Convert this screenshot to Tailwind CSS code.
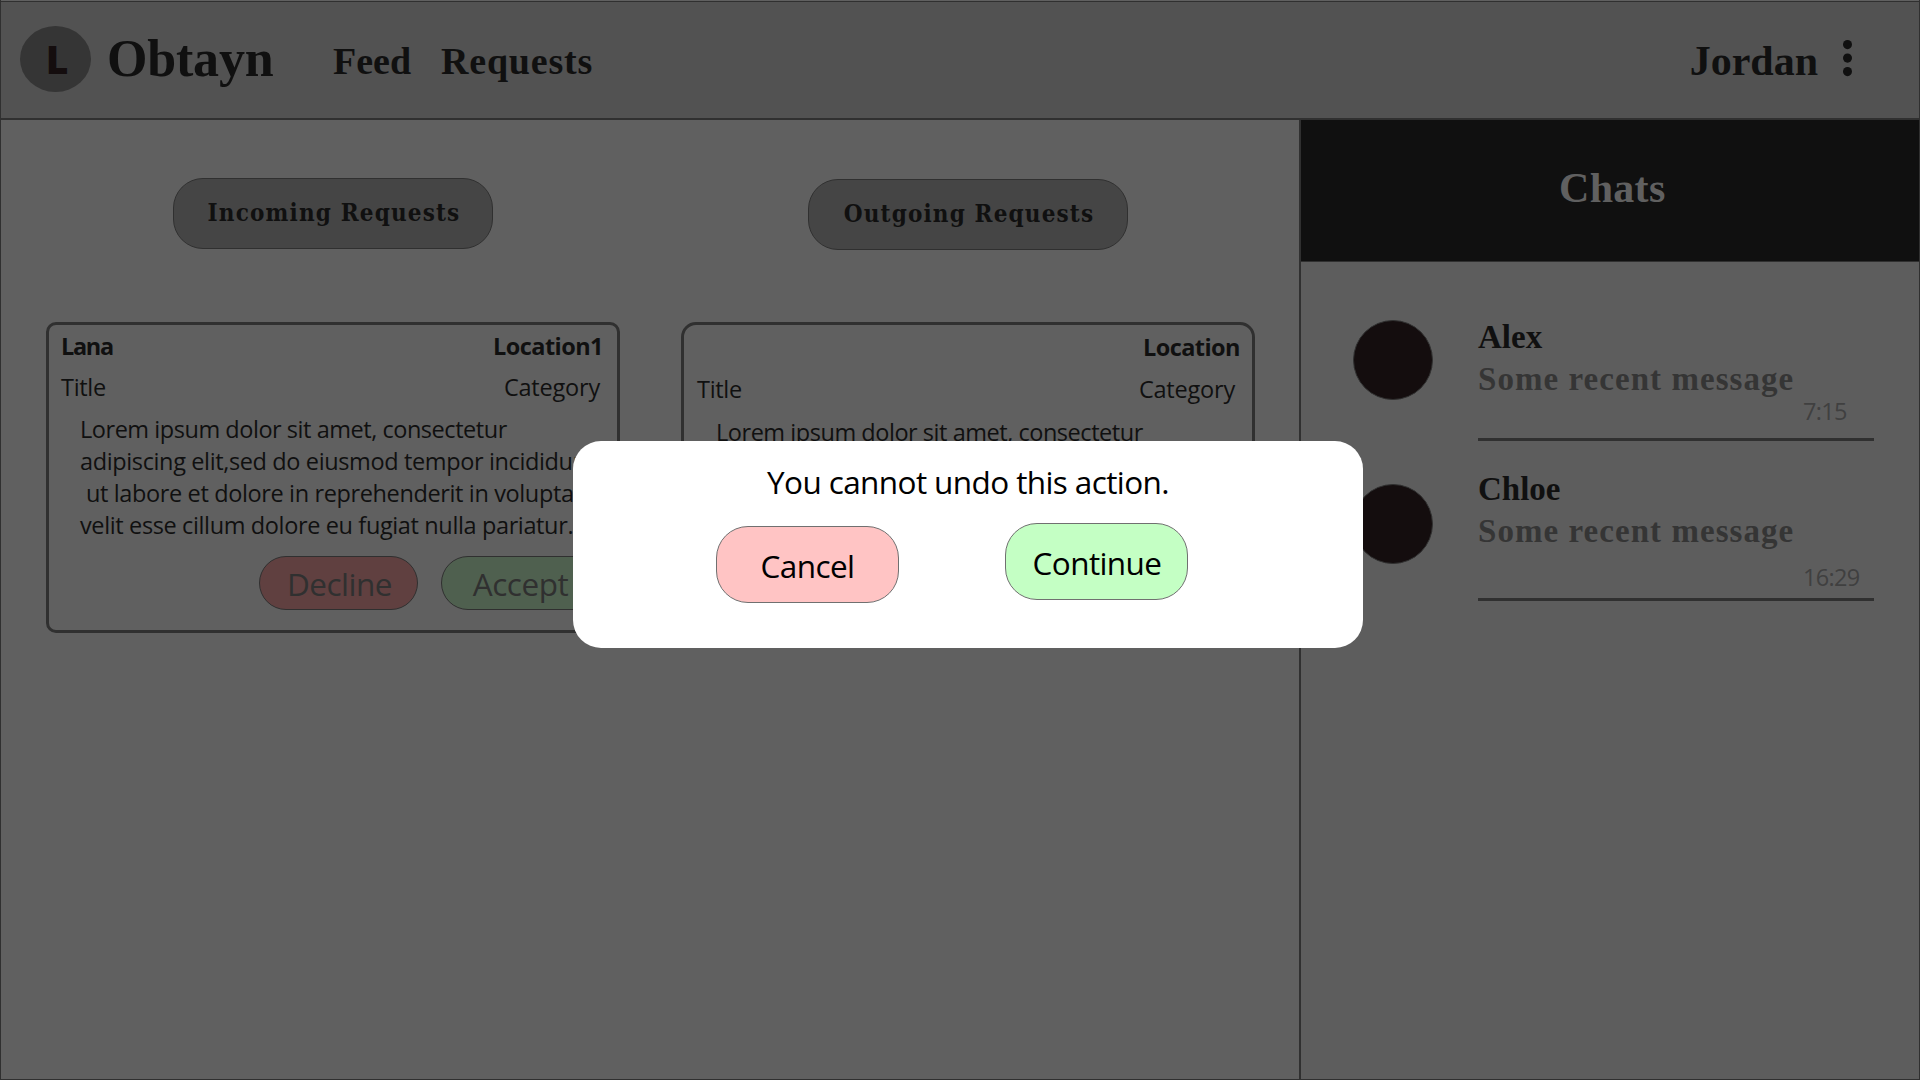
<!DOCTYPE html>
<html lang="en">
<head>
<meta charset="utf-8">
<title>Obtayn</title>
<script src="https://cdn.jsdelivr.net/npm/@tailwindcss/browser@4"></script>
</head>
<body class="bg-[#606060]">
<div class="relative flex h-[1080px] w-[1920px] flex-col overflow-hidden whitespace-nowrap border-x border-b border-[#303030] bg-[#606060] pt-px font-['Open_Sans',sans-serif] text-[#101010]">
  <header class="flex h-[119px] shrink-0 items-start border-t border-b-2 border-[#303030] bg-[#525252] font-['Liberation_Serif',serif] font-bold">
    <div class="mt-6 ml-[19px] flex h-[66px] w-[71px] items-center justify-center rounded-[50%] bg-[#353535] pl-[3px] font-['Open_Sans',sans-serif] text-[39px] font-extrabold text-[#140d0e]">L</div>
    <h1 class="mt-[31px] ml-[16px] w-[167px] text-[52px] leading-[52px] tracking-[-0.2px]">Obtayn</h1>
    <nav class="mt-10 ml-[59px] flex text-[38px] leading-[38px]">
      <a class="w-[108px]">Feed</a>
      <a class="tracking-[0.8px]">Requests</a>
    </nav>
    <div class="mt-[38px] ml-auto text-[42px] leading-[42px]">Jordan</div>
    <svg class="mt-[38px] mr-[67px] ml-[25px]" width="9" height="37" viewBox="0 0 9 37" fill="#101010"><ellipse cx="4.5" cy="4.6" rx="4.5" ry="4.6"/><ellipse cx="4.5" cy="18.1" rx="4.5" ry="4.6"/><ellipse cx="4.5" cy="31.6" rx="4.5" ry="4.6"/></svg>
  </header>
  <div class="flex grow">
    <main class="flex w-[1298px] items-start gap-[61px] pl-[45px]">
      <section class="flex w-[574px] flex-col items-center pt-[58px]">
        <button class="h-[71px] w-[320px] rounded-[30px] border border-[#303030] bg-[#454545] pb-[3px] pl-[2px] font-['DejaVu_Serif_Condensed','DejaVu_Serif',serif] text-[24px] leading-[27px] font-bold tracking-[1.15px]">Incoming Requests</button>
        <article class="mt-[73px] flex h-[311px] w-full flex-col rounded-[10px] border-3 border-[#303030] pt-[9px] text-[23.5px] leading-6 tracking-[-0.46px]">
          <div class="flex justify-between pr-[14px] pl-3 font-bold tracking-[-0.55px]"><span class="tracking-[-1.3px]">Lana</span><span>Location1</span></div>
          <div class="mt-[17px] flex justify-between pr-[17px] pl-3"><span class="tracking-[-0.3px]">Title</span><span class="tracking-[-0.2px]">Category</span></div>
          <p class="mt-[14px] pl-[31px] leading-8 tracking-[-0.37px]"><span class="tracking-[-0.46px]">Lorem ipsum dolor sit amet, consectetur</span><br>adipiscing elit,sed do eiusmod tempor incididunt<br><span class="ml-[6px]">ut labore et dolore in reprehenderit in voluptate</span><br>velit esse cillum dolore eu fugiat nulla pariatur.</p>
          <div class="mt-[15px] ml-[210px] flex gap-[23px] text-[31.5px] leading-8 tracking-[-0.5px] text-[#303030]">
            <button class="h-[54px] w-[159px] rounded-[27px] border border-[#303030] bg-[#604040] pt-[2px] pl-[2px]">Decline</button>
            <button class="h-[54px] w-[159px] rounded-[27px] border border-[#303030] bg-[#4f604f] pt-[2px]">Accept</button>
          </div>
        </article>
      </section>
      <section class="flex w-[574px] flex-col items-center pt-[59px]">
        <button class="h-[71px] w-[320px] rounded-[30px] border border-[#303030] bg-[#454545] pb-[3px] pl-[2px] font-['DejaVu_Serif_Condensed','DejaVu_Serif',serif] text-[24px] leading-[27px] font-bold tracking-[1.15px]">Outgoing Requests</button>
        <article class="mt-[72px] flex h-[311px] w-full flex-col rounded-[15px] border-3 border-[#303030] pt-[10px] text-[23.5px] leading-6 tracking-[-0.46px]">
          <div class="flex justify-end pr-[12px] font-bold tracking-[-0.55px]"><span>Location</span></div>
          <div class="mt-[18px] flex justify-between pr-[17px] pl-[13px]"><span class="tracking-[-0.3px]">Title</span><span class="tracking-[-0.2px]">Category</span></div>
          <p class="mt-[15px] pl-[32px] leading-8">Lorem ipsum dolor sit amet, consectetur</p>
        </article>
      </section>
    </main>
    <aside class="grow border-l-2 border-[#303030] bg-[#5d5d5d] font-['Liberation_Serif',serif] font-bold">
      <div class="h-[142px] border-b border-[#303030] bg-[#101010] pt-[47px] pl-[258px] text-[42px] leading-[42px] tracking-[0.3px] text-[#606060]">Chats</div>
      <div class="mt-[58px] ml-[52px] flex">
        <div class="size-20 rounded-full border border-[#303030] bg-[#140d0e]"></div>
        <div class="ml-[45px] flex h-[121px] w-[396px] flex-col border-b-3 border-[#303030] pt-px text-[33px] leading-[33px]">
          <div>Alex</div>
          <div class="mt-[9px] tracking-[1.05px] text-[#353535]">Some recent message</div>
          <div class="mt-[3px] ml-[325px] font-['Open_Sans',sans-serif] text-[23.5px] leading-6 font-normal tracking-[-0.7px] text-[#404040]">7:15</div>
        </div>
      </div>
      <div class="mt-[31px] ml-[52px] flex">
        <div class="mt-3 size-20 rounded-full border border-[#303030] bg-[#140d0e]"></div>
        <div class="ml-[45px] flex h-[129px] w-[396px] flex-col border-b-3 border-[#303030] pt-px text-[33px] leading-[33px]">
          <div>Chloe</div>
          <div class="mt-[9px] tracking-[1.05px] text-[#353535]">Some recent message</div>
          <div class="mt-[17px] ml-[325px] font-['Open_Sans',sans-serif] text-[23.5px] leading-6 font-normal tracking-[-0.7px] text-[#404040]">16:29</div>
        </div>
      </div>
    </aside>
  </div>
  <div class="absolute top-[441px] left-[572px] h-[207px] w-[790px] rounded-[28px] bg-white text-center text-[31.5px] leading-8 tracking-[-0.6px] text-black">
    <p class="pt-[25px]">You cannot undo this action.</p>
    <div class="mt-[25px] ml-[143px] flex gap-[106px]">
      <button class="mt-[3px] h-[77px] w-[183px] rounded-[32px] border border-[#707070] bg-[#ffc4c4] pt-[3px]">Cancel</button>
      <button class="h-[77px] w-[183px] rounded-[32px] border border-[#707070] bg-[#c4ffc4] pt-[3px] pl-px">Continue</button>
    </div>
  </div>
</div>
</body>
</html>
